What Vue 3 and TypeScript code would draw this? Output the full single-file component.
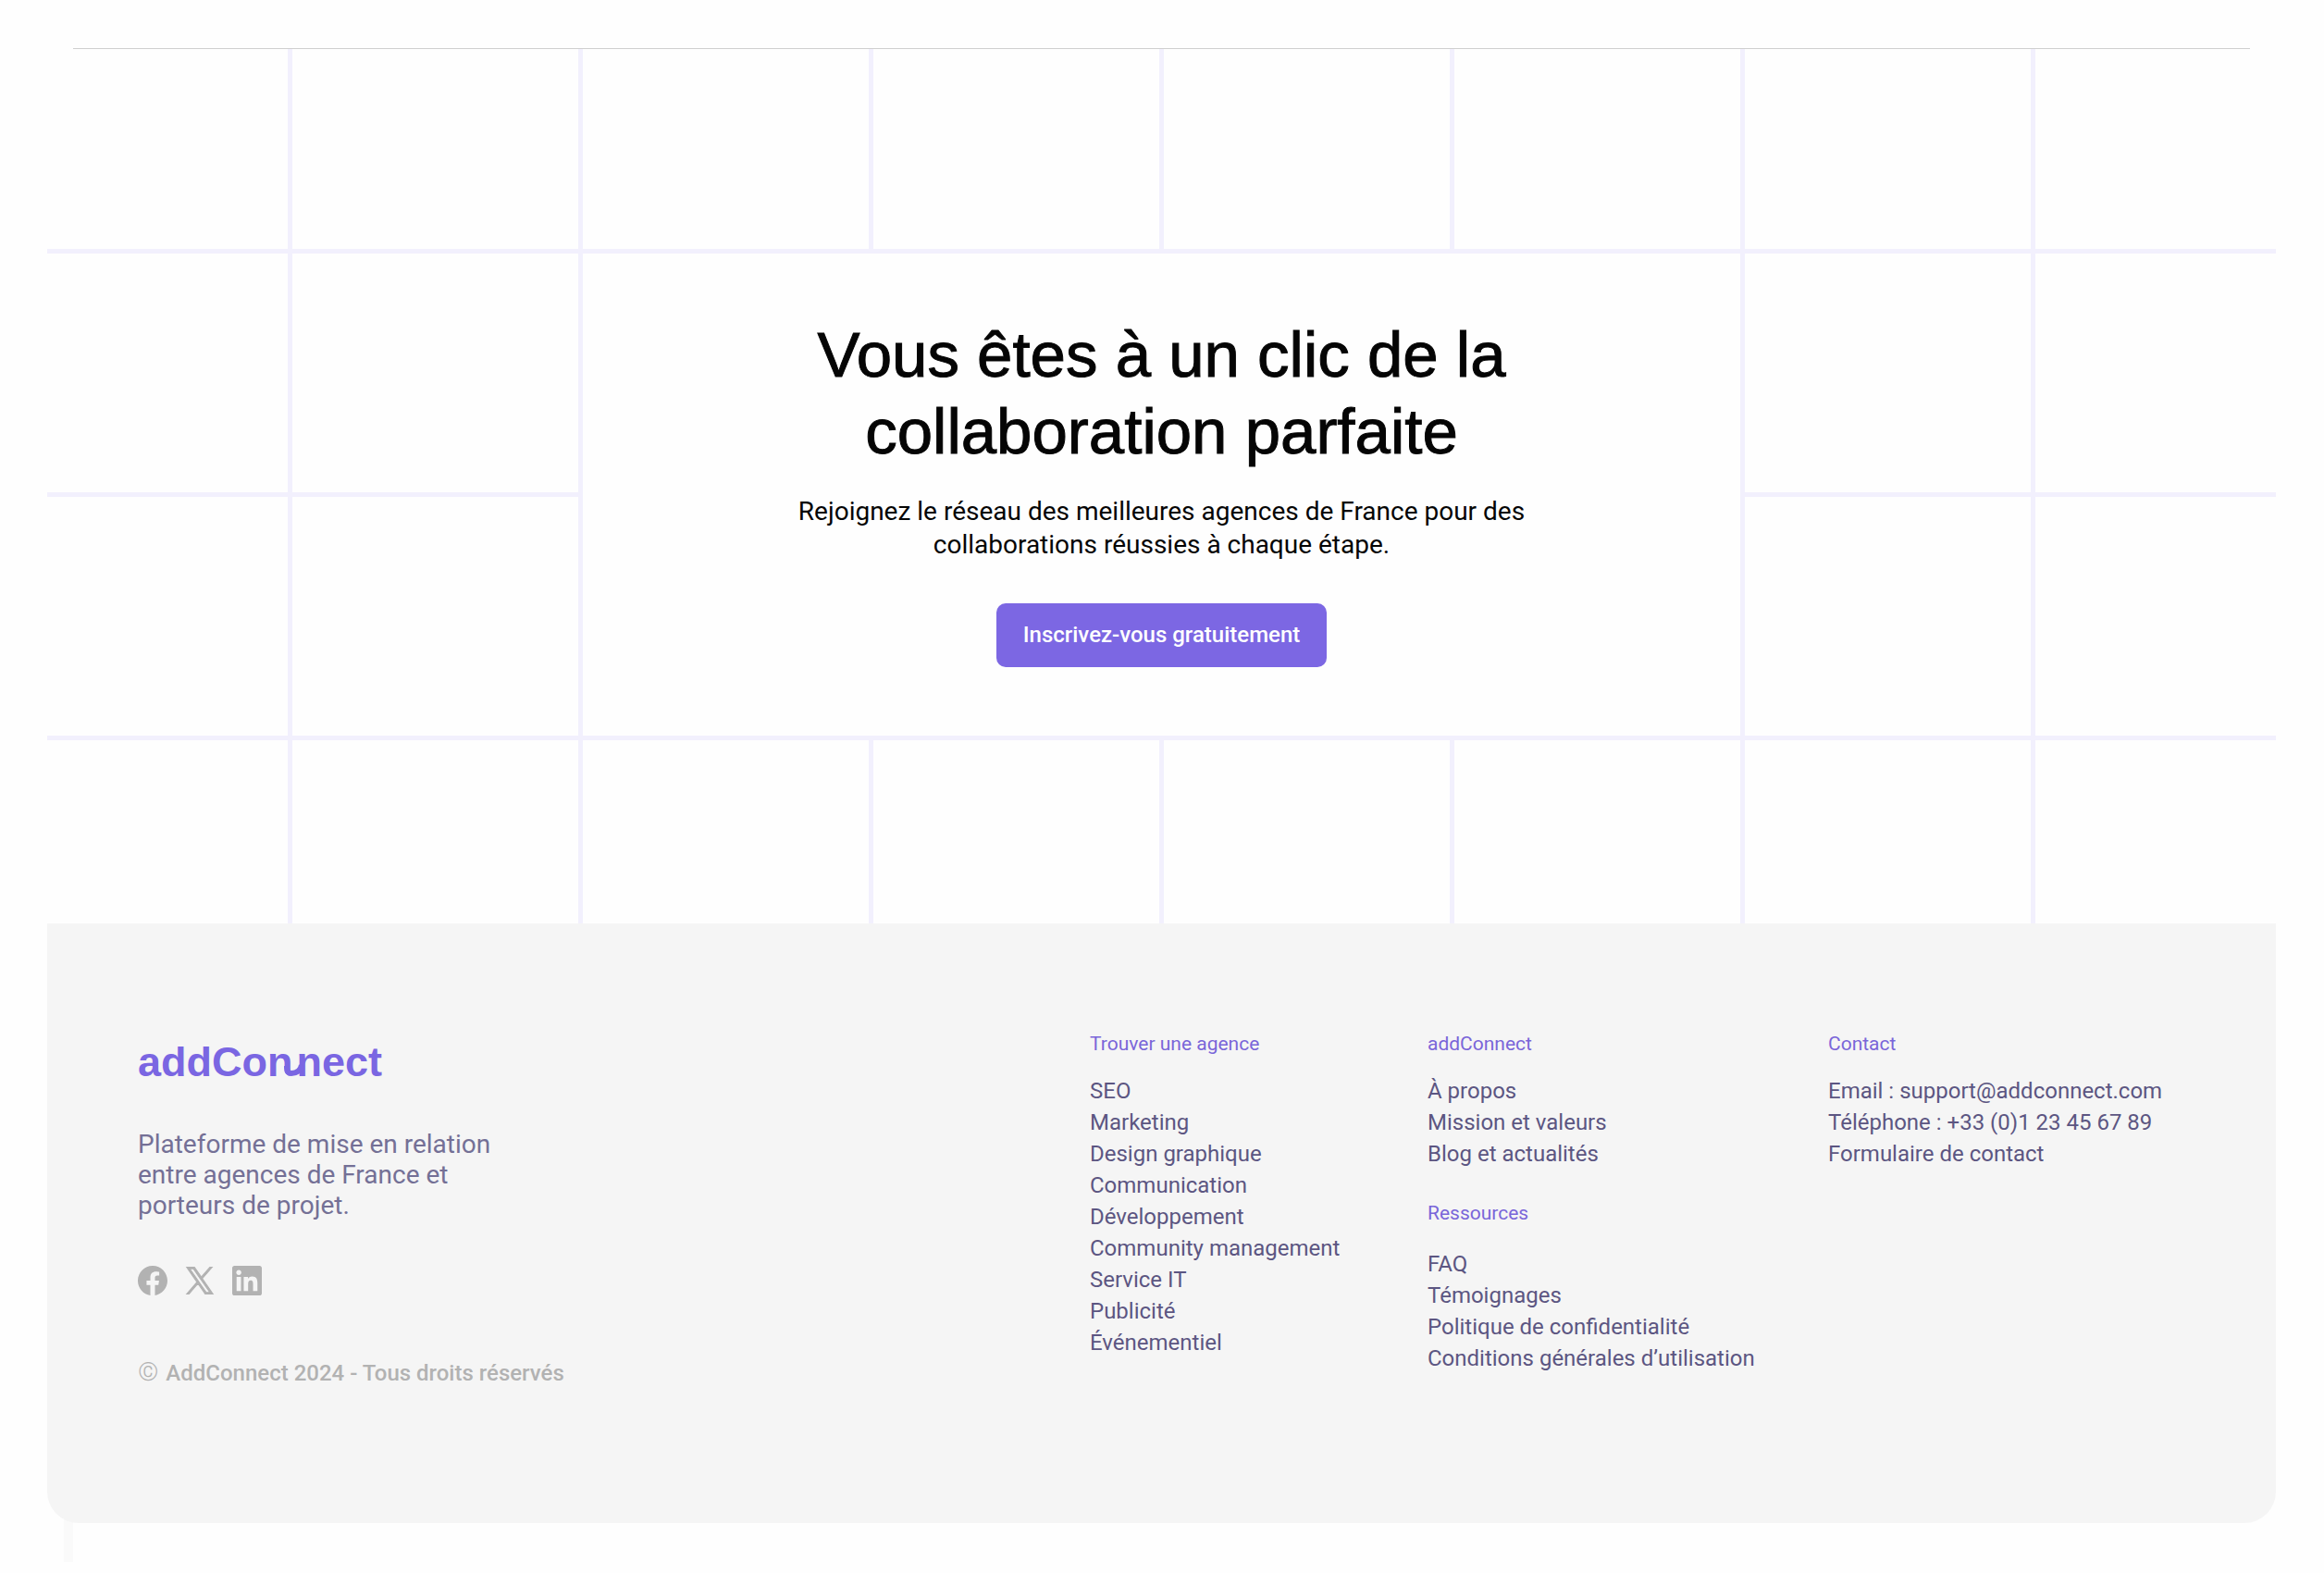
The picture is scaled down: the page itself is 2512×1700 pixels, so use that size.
<script setup lang="ts">
interface LinkGroup {
  title: string
  links: string[]
}

const columns: LinkGroup[][] = [
  [
    {
      title: 'Trouver une agence',
      links: [
        'SEO',
        'Marketing',
        'Design graphique',
        'Communication',
        'Développement',
        'Community management',
        'Service IT',
        'Publicité',
        'Événementiel',
      ],
    },
  ],
  [
    { title: 'addConnect', links: ['À propos', 'Mission et valeurs', 'Blog et actualités'] },
    {
      title: 'Ressources',
      links: ['FAQ', 'Témoignages', 'Politique de confidentialité', 'Conditions générales d’utilisation'],
    },
  ],
  [
    {
      title: 'Contact',
      links: ['Email : support@addconnect.com', 'Téléphone : +33 (0)1 23 45 67 89', 'Formulaire de contact'],
    },
  ],
]

const socials = [
  {
    name: 'Facebook',
    viewBox: '0 0 16 16',
    outline: 0,
    path: 'M16 8.049c0-4.446-3.582-8.05-8-8.05C3.58 0-.002 3.603-.002 8.05c0 4.017 2.926 7.347 6.75 7.951v-5.625h-2.03V8.05H6.75V6.275c0-2.017 1.195-3.131 3.022-3.131.876 0 1.791.157 1.791.157v1.98h-1.009c-.993 0-1.303.621-1.303 1.258v1.51h2.218l-.354 2.326H9.25V16c3.824-.604 6.75-3.934 6.75-7.951',
  },
  {
    name: 'X',
    viewBox: '-50 -60 1300 1347',
    outline: 44,
    path: 'M714.163 519.284L1160.89 0H1055.03L667.137 450.887L357.328 0H0L468.492 681.821L0 1226.37H105.866L515.491 750.218L842.672 1226.37H1200L714.137 519.284H714.163ZM569.165 687.828L521.697 619.934L144.011 79.6944H306.615L611.412 515.685L658.88 583.579L1055.08 1150.3H892.476L569.165 687.854V687.828Z',
  },
  {
    name: 'LinkedIn',
    viewBox: '0 0 24 24',
    outline: 0,
    path: 'M20.447 20.452h-3.554v-5.569c0-1.328-.027-3.037-1.852-3.037-1.853 0-2.136 1.445-2.136 2.939v5.667H9.351V9h3.414v1.561h.046c.477-.9 1.637-1.85 3.37-1.85 3.601 0 4.267 2.37 4.267 5.455v6.286zM5.337 7.433c-1.144 0-2.063-.926-2.063-2.065 0-1.138.92-2.063 2.063-2.063 1.14 0 2.064.925 2.064 2.063 0 1.139-.925 2.065-2.064 2.065zm1.782 13.019H3.555V9h3.564v11.452zM22.225 0H1.771C.792 0 0 .774 0 1.729v20.542C0 23.227.792 24 1.771 24h20.451C23.2 24 24 23.227 24 22.271V1.729C24 .774 23.2 0 22.222 0h.003z',
  },
]

// Eight cells above and below, two on each side of the call to action per middle row.
const before = 10
const after = 14
</script>

<template>
  <div class="page">
    <main class="hero">
      <span v-for="n in before" :key="'b' + n" class="cell"></span>
      <section class="cta">
        <h1>Vous êtes à un clic de la<br />collaboration parfaite</h1>
        <p>Rejoignez le réseau des meilleures agences de France pour des<br />collaborations réussies à chaque étape.</p>
        <button type="button">Inscrivez-vous gratuitement</button>
      </section>
      <span v-for="n in after" :key="'a' + n" class="cell"></span>
    </main>

    <footer class="footer">
      <div class="brand">
        <a href="#" class="logo">addCon<span class="join"><svg viewBox="-12 -14 24 16" aria-hidden="true">
          <path class="cut" d="M-11 2V-9h2C-9-3-6 0 0 0V2z" />
          <path class="bowl" d="M-6-11V-9C-6-5-4-3-1-3C4-3 9-6 10-12" />
        </svg></span>nect</a>
        <p class="pitch">Plateforme de mise en relation<br />entre agences de France et<br />porteurs de projet.</p>
        <ul class="socials">
          <li v-for="s in socials" :key="s.name">
            <a href="#" :aria-label="s.name">
              <svg :viewBox="s.viewBox" aria-hidden="true"><path :d="s.path" :stroke-width="s.outline" /></svg>
            </a>
          </li>
        </ul>
        <p class="legal"><span class="mark">©</span> AddConnect 2024 - Tous droits réservés</p>
      </div>

      <nav v-for="(groups, i) in columns" :key="i" :aria-label="groups[0].title">
        <div v-for="g in groups" :key="g.title" class="group">
          <h2>{{ g.title }}</h2>
          <ul class="links">
            <li v-for="l in g.links" :key="l"><a href="#">{{ l }}</a></li>
          </ul>
        </div>
      </nav>
    </footer>
  </div>
</template>

<style>
body {
  margin: 0;
  background: #fefefe;
}
</style>

<style scoped>
.page {
  position: relative;
  padding: 52px 52px 52px 51px;
  font-family: Roboto, "Liberation Sans", sans-serif;
}

.page::before {
  content: "";
  display: block;
  height: 1px;
  margin: 0 28px;
  background: #cfcfcf;
}

.page::after {
  content: "";
  position: absolute;
  z-index: -1;
  left: 69px;
  bottom: 10px;
  width: 10px;
  height: 60px;
  background: #fafafa;
}

h1,
h2,
p,
ul {
  margin: 0;
  padding: 0;
  font-weight: 400;
}

ul {
  list-style: none;
}

a {
  color: inherit;
  text-decoration: none;
}

.hero {
  display: grid;
  grid-template-columns: 260fr repeat(6, 309fr) 260fr;
  grid-template-rows: 216px minmax(258px, auto) minmax(258px, auto) 198px;
  gap: 5px;
  background: #f2f0fd;
}

.cell,
.cta {
  background: #fefefe;
}

.cta {
  grid-area: 2 / 3 / 4 / 7;
  display: flex;
  flex-direction: column;
  align-items: center;
  padding: 68px 24px 72px;
  text-align: center;
  color: #050505;
}

.cta h1 {
  font: 400 69px/83px "Liberation Sans", sans-serif;
  -webkit-text-stroke: 1px #050505;
}

.cta p {
  margin-top: 27px;
  font-size: 28px;
  line-height: 36px;
}

.cta button {
  margin-top: 45px;
  padding: 20px 29px;
  border: 0;
  border-radius: 10px;
  background: #7c67e3;
  color: #fff;
  font: 500 24px/29px Roboto, sans-serif;
}

.footer {
  display: grid;
  grid-template-columns: 1fr 365px 433px 386px;
  padding: 117px 98px 148px;
  border-radius: 0 0 34px 34px;
  background: #f5f5f5;
}

.brand {
  padding-top: 9px;
}

.logo {
  display: block;
  font: 700 45px/48px "Liberation Sans", sans-serif;
  color: #7a66e2;
}

/* Curved stroke that ties the two n's of the wordmark together */
.join {
  position: relative;
  display: inline-block;
  width: 4px;
}

.join svg {
  position: absolute;
  left: -12px;
  bottom: -2px;
  width: 24px;
  height: 16px;
}

.cut {
  fill: #f5f5f5;
}

.bowl {
  fill: none;
  stroke: #7a66e2;
  stroke-width: 6;
}

.pitch {
  margin-top: 48px;
  font-size: 28px;
  line-height: 33px;
  color: #747096;
}

.socials {
  display: flex;
  gap: 19px;
  margin-top: 49px;
}

.socials a,
.socials svg {
  display: block;
  width: 32px;
  height: 32px;
  fill: #b2b2b2;
  stroke: #b2b2b2;
}

.legal {
  margin-top: 70px;
  font-size: 24px;
  font-weight: 500;
  line-height: 28px;
  color: #b2b2b2;
}

.mark {
  margin-right: 2px;
  font-size: 28px;
  font-weight: 300;
  line-height: 24px;
}

.group h2 {
  font-size: 21px;
  line-height: 26px;
  color: #7a66d9;
}

.links {
  margin-top: 21px;
  font-size: 24px;
  line-height: 34px;
  color: #5c5682;
}

.group + .group {
  margin-top: 34px;
}

.group + .group .links {
  margin-top: 25px;
}
</style>
